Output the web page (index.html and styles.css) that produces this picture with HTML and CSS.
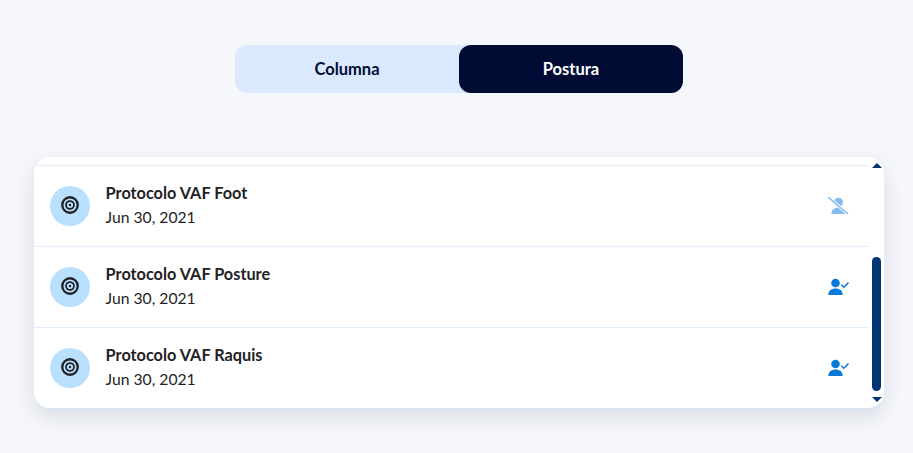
FILE: index.html
```html
<!DOCTYPE html>
<html lang="es">
<head>
<meta charset="utf-8">
<title>Protocolos</title>
<link rel="stylesheet" href="styles.css">
</head>
<body>
<main class="page">
  <div class="toggle">
    <button class="tab">Columna</button>
    <button class="tab tab-active">Postura</button>
  </div>
  <section class="card">
    <ul class="list">
      <li class="row">
        <span class="avatar"><svg class="target" viewBox="0 0 20 20"><circle cx="10" cy="10" r="8.600" fill="none" stroke="#1f2226" stroke-width="2.600"/><circle cx="10" cy="10" r="4.400" fill="none" stroke="#1f2226" stroke-width="2"/><circle cx="10" cy="10" r="1.300" fill="#1f2226"/></svg></span>
        <div class="text"><div class="name">Protocolo VAF Foot</div><div class="date">Jun 30, 2021</div></div>
        <svg class="status" viewBox="0 0 22 18"><circle cx="10.500" cy="5.200" r="4.500" fill="#85bdf0"/><path d="M3.400 17c0-4.200 3.100-6.500 7.100-6.500s7.100 2.300 7.100 6.500z" fill="#85bdf0"/><path d="M0 0l20 17" stroke="#fff" stroke-width="3"/><path d="M0 0l20 17" stroke="#85bdf0" stroke-width="1.500"/></svg>
      </li>
      <li class="row">
        <span class="avatar"><svg class="target" viewBox="0 0 20 20"><circle cx="10" cy="10" r="8.600" fill="none" stroke="#1f2226" stroke-width="2.600"/><circle cx="10" cy="10" r="4.400" fill="none" stroke="#1f2226" stroke-width="2"/><circle cx="10" cy="10" r="1.300" fill="#1f2226"/></svg></span>
        <div class="text"><div class="name">Protocolo VAF Posture</div><div class="date">Jun 30, 2021</div></div>
        <svg class="status" viewBox="0 0 22 18"><circle cx="7.500" cy="5" r="4.300" fill="#0a7ad9"/><path d="M0.300 17c0-4.400 3.100-6.500 7.200-6.500s7.200 2.100 7.200 6.500z" fill="#0a7ad9"/><path d="M13.300 6.800l2.500 2.500 4.700-4.700" fill="none" stroke="#0a7ad9" stroke-width="1.500"/></svg>
      </li>
      <li class="row">
        <span class="avatar"><svg class="target" viewBox="0 0 20 20"><circle cx="10" cy="10" r="8.600" fill="none" stroke="#1f2226" stroke-width="2.600"/><circle cx="10" cy="10" r="4.400" fill="none" stroke="#1f2226" stroke-width="2"/><circle cx="10" cy="10" r="1.300" fill="#1f2226"/></svg></span>
        <div class="text"><div class="name">Protocolo VAF Raquis</div><div class="date">Jun 30, 2021</div></div>
        <svg class="status" viewBox="0 0 22 18"><circle cx="7.500" cy="5" r="4.300" fill="#0a7ad9"/><path d="M0.300 17c0-4.400 3.100-6.500 7.200-6.500s7.200 2.100 7.200 6.500z" fill="#0a7ad9"/><path d="M13.300 6.800l2.500 2.500 4.700-4.700" fill="none" stroke="#0a7ad9" stroke-width="1.500"/></svg>
      </li>
    </ul>
    <div class="scrollbar">
      <span class="arrow arrow-up"></span>
      <span class="thumb"></span>
      <span class="arrow arrow-down"></span>
    </div>
  </section>
</main>
</body>
</html>
```
FILE: styles.css
```css
* { box-sizing: border-box; }
html, body { margin: 0; height: 100%; }
body {
  background: #f5f7fb;
  font-family: "Lato", "Liberation Sans", sans-serif;
  overflow: hidden;
}
.page {
  display: flex;
  flex-direction: column;
  align-items: center;
  padding: 45px 29px 0 34px;
  gap: 64px;
}
.toggle {
  display: flex;
  width: 448px;
  height: 48px;
  background: #dbe9ff;
  border-radius: 12px;
}
.tab {
  flex: 1;
  border: 0;
  background: none;
  border-radius: 12px;
  font: 700 16.5px "Lato", "Liberation Sans", sans-serif;
  color: #000c33;
  padding: 0 0 1px;
}
.tab-active { background: #000c33; color: #fff; }
.card {
  position: relative;
  width: 850px;
  height: 252px;
  background: #fff;
  border-radius: 16px;
  border-bottom: 1px solid #d8e7f8;
  box-shadow: 0 8px 20px rgba(15, 25, 55, 0.12);
  overflow: hidden;
  padding: 8px 15px 0 0;
}
.list { list-style: none; margin: 0; padding: 0; }
.row {
  display: flex;
  align-items: center;
  height: 81px;
  border-top: 1px solid #e1eefb;
  padding: 0 19px 0 16px;
}
.avatar {
  display: flex;
  align-items: center;
  justify-content: center;
  width: 40px;
  height: 40px;
  border-radius: 50%;
  background: #b9e0ff;
  flex: none;
}
.target { width: 18px; height: 18px; margin-bottom: 2px; }
.text { flex: 1; margin: 0 0 2px 15.6px; }
.name { font-size: 16.3px; font-weight: 700; line-height: 24px; color: #1f2226; }
.date { font-size: 15.7px; line-height: 24px; color: #1f2226; }
.status { width: 22px; height: 18px; flex: none; }
.scrollbar {
  position: absolute;
  top: 0;
  right: 3px;
  bottom: 0;
  width: 9px;
  display: flex;
  flex-direction: column;
  align-items: center;
}
.thumb {
  width: 9px;
  height: 134px;
  margin-top: 89px;
  border-radius: 5px;
  background: #003473;
}
.arrow { width: 0; height: 0; border-left: 5px solid transparent; border-right: 5px solid transparent; }
.arrow-up { border-bottom: 5px solid #003473; margin-top: 6px; }
.arrow-down { border-top: 5px solid #003473; margin-top: 6px; }
```
